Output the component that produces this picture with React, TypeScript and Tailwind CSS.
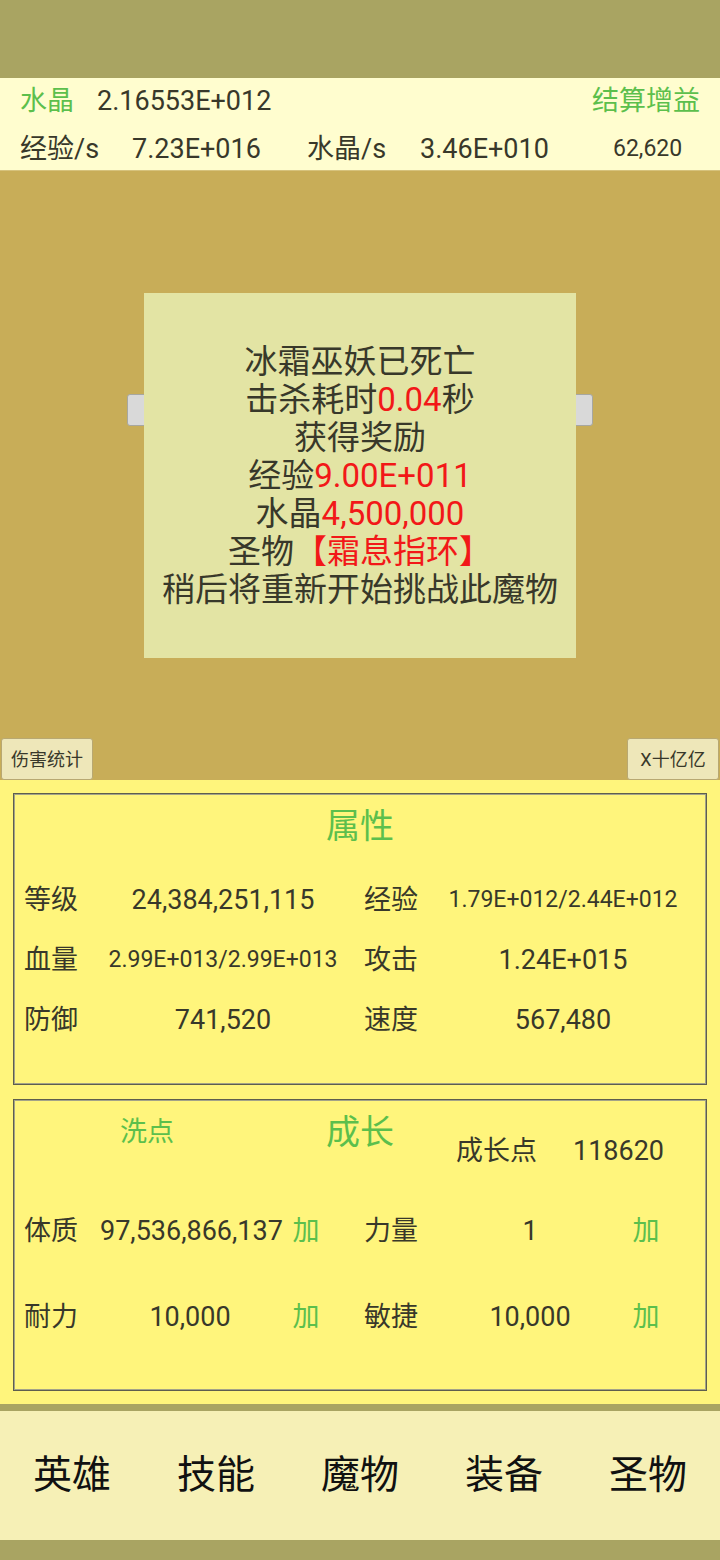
import React from "react";

const FONT = { fontFamily: "Roboto, 'Noto Sans CJK SC', 'Noto Sans', sans-serif" };

function Panel({ children }: { children: React.ReactNode }) {
  return (
    <div className="border border-[#5e5e4e] mx-[13px]">
      <div className="border border-[#a3a388] h-[290px]">{children}</div>
    </div>
  );
}

function AttrRow({ l1, v1, l2, v2, s1, s2 }: { l1: string; v1: string; l2: string; v2: string; s1?: boolean; s2?: boolean }) {
  return (
    <div className="flex items-center h-[60px] pl-[9px] text-[#38382a]">
      <div className="w-[76px] text-[27px]">{l1}</div>
      <div className={`w-[246px] text-center ${s1 ? "text-[23px]" : "text-[27px]"}`}>{v1}</div>
      <div className="w-[18px]" />
      <div className="w-[76px] text-[27px]">{l2}</div>
      <div className={`w-[246px] text-center ${s2 ? "text-[23px]" : "text-[27px]"}`}>{v2}</div>
    </div>
  );
}

function GrowRow({ l1, v1, l2, v2 }: { l1: string; v1: string; l2: string; v2: string }) {
  return (
    <div className="flex items-center h-[86px] pl-[9px] text-[#38382a] text-[27px]">
      <div className="w-[76px]">{l1}</div>
      <div className="w-[180px] text-center">{v1}</div>
      <div className="w-[52px] text-center text-[#5cbf4c]">加</div>
      <div className="w-[32px]" />
      <div className="w-[76px]">{l2}</div>
      <div className="w-[180px] text-center">{v2}</div>
      <div className="w-[52px] text-center text-[#5cbf4c]">加</div>
    </div>
  );
}

export default function App() {
  return (
    <div style={FONT} className="w-[720px] h-[1560px] flex flex-col bg-[#a9a462] overflow-hidden">
      {/* top band */}
      <div className="h-[78px] shrink-0 bg-[#a9a462]" />

      {/* header */}
      <div className="h-[92px] shrink-0 bg-[#fffdcf] flex flex-col text-[#38382a]">
        <div className="h-[46px] flex items-center pl-[20px] pr-[20px] text-[27px]">
          <div className="w-[77px] text-[#5cbf4c]">水晶</div>
          <div>2.16553E+012</div>
          <div className="ml-auto text-[#5cbf4c]">结算增益</div>
        </div>
        <div className="h-[46px] flex items-center pl-[20px] pt-[4px] text-[27px]">
          <div className="w-[112px]">经验/s</div>
          <div className="w-[175px]">7.23E+016</div>
          <div className="w-[113px]">水晶/s</div>
          <div className="w-[193px]">3.46E+010</div>
          <div className="text-[23px]">62,620</div>
        </div>
      </div>

      {/* battle area */}
      <div className="h-[610px] shrink-0 bg-[#c8ad58] flex flex-col border-t border-[#d6c27c]">
        <div className="h-[122px]" />
        <div className="flex justify-center">
          <div className="relative w-[432px] h-[365px]">
            <div className="absolute left-[-17px] top-[101px] w-[30px] h-[32px] bg-[#d9d9d9] border border-[#a7a7a0] rounded-[3px]" />
            <div className="absolute right-[-17px] top-[101px] w-[30px] h-[32px] bg-[#d9d9d9] border border-[#a7a7a0] rounded-[3px]" />
            <div className="relative w-full h-full bg-[#e3e4a4] flex flex-col items-center justify-center text-[33px] leading-[38px] text-[#38382a]">
              <div>冰霜巫妖已死亡</div>
              <div>
                击杀耗时<span className="text-[#f21818]">0.04</span>秒
              </div>
              <div>获得奖励</div>
              <div>
                经验<span className="text-[#f21818]">9.00E+011</span>
              </div>
              <div>
                水晶<span className="text-[#f21818]">4,500,000</span>
              </div>
              <div>
                圣物<span className="text-[#f21818]">【霜息指环】</span>
              </div>
              <div>稍后将重新开始挑战此魔物</div>
            </div>
          </div>
        </div>
        <div className="flex-1" />
        <div className="flex justify-between items-end">
          <div className="ml-[1px] w-[92px] h-[42px] bg-[#eee7b9] border border-[#b8a872] rounded-[3px] flex items-center justify-center text-[18px] text-[#38382a]">
            伤害统计
          </div>
          <div className="mr-[1px] w-[92px] h-[42px] bg-[#eee7b9] border border-[#b8a872] rounded-[3px] flex items-center justify-center text-[18px] text-[#38382a]">
            X十亿亿
          </div>
        </div>
      </div>

      {/* yellow section */}
      <div className="h-[624px] shrink-0 bg-[#fff57c] pt-[13px] flex flex-col gap-[14px]">
        <Panel>
          <div className="h-[62px] flex items-center justify-center text-[34px] text-[#5cbf4c]">属性</div>
          <div className="h-[13px]" />
          <AttrRow l1="等级" v1="24,384,251,115" l2="经验" v2="1.79E+012/2.44E+012" s2 />
          <AttrRow l1="血量" v1="2.99E+013/2.99E+013" l2="攻击" v2="1.24E+015" s1 />
          <AttrRow l1="防御" v1="741,520" l2="速度" v2="567,480" />
        </Panel>
        <Panel>
          <div className="h-[87px] flex items-start">
            <div className="w-[264px] h-[62px] flex items-center justify-center text-[27px] text-[#5cbf4c]">洗点</div>
            <div className="w-[162px] h-[62px] flex items-center justify-center text-[34px] text-[#5cbf4c]">成长</div>
            <div className="pl-[15px] h-[100px] flex items-center text-[27px] text-[#38382a] mt-[-19px] pt-[38px]">
              <div className="w-[117px]">成长点</div>
              <div>118620</div>
            </div>
          </div>
          <GrowRow l1="体质" v1="97,536,866,137" l2="力量" v2="1" />
          <GrowRow l1="耐力" v1="10,000" l2="敏捷" v2="10,000" />
        </Panel>
      </div>

      {/* strip */}
      <div className="h-[7px] shrink-0 bg-[#a9a462]" />

      {/* nav */}
      <div className="h-[129px] shrink-0 bg-[#f6f0b6] flex items-center text-[39px] text-[#111111]">
        {["英雄", "技能", "魔物", "装备", "圣物"].map((t) => (
          <div key={t} className="w-[144px] text-center">
            {t}
          </div>
        ))}
      </div>

      <div className="h-[20px] shrink-0 bg-[#a9a462]" />
    </div>
  );
}
